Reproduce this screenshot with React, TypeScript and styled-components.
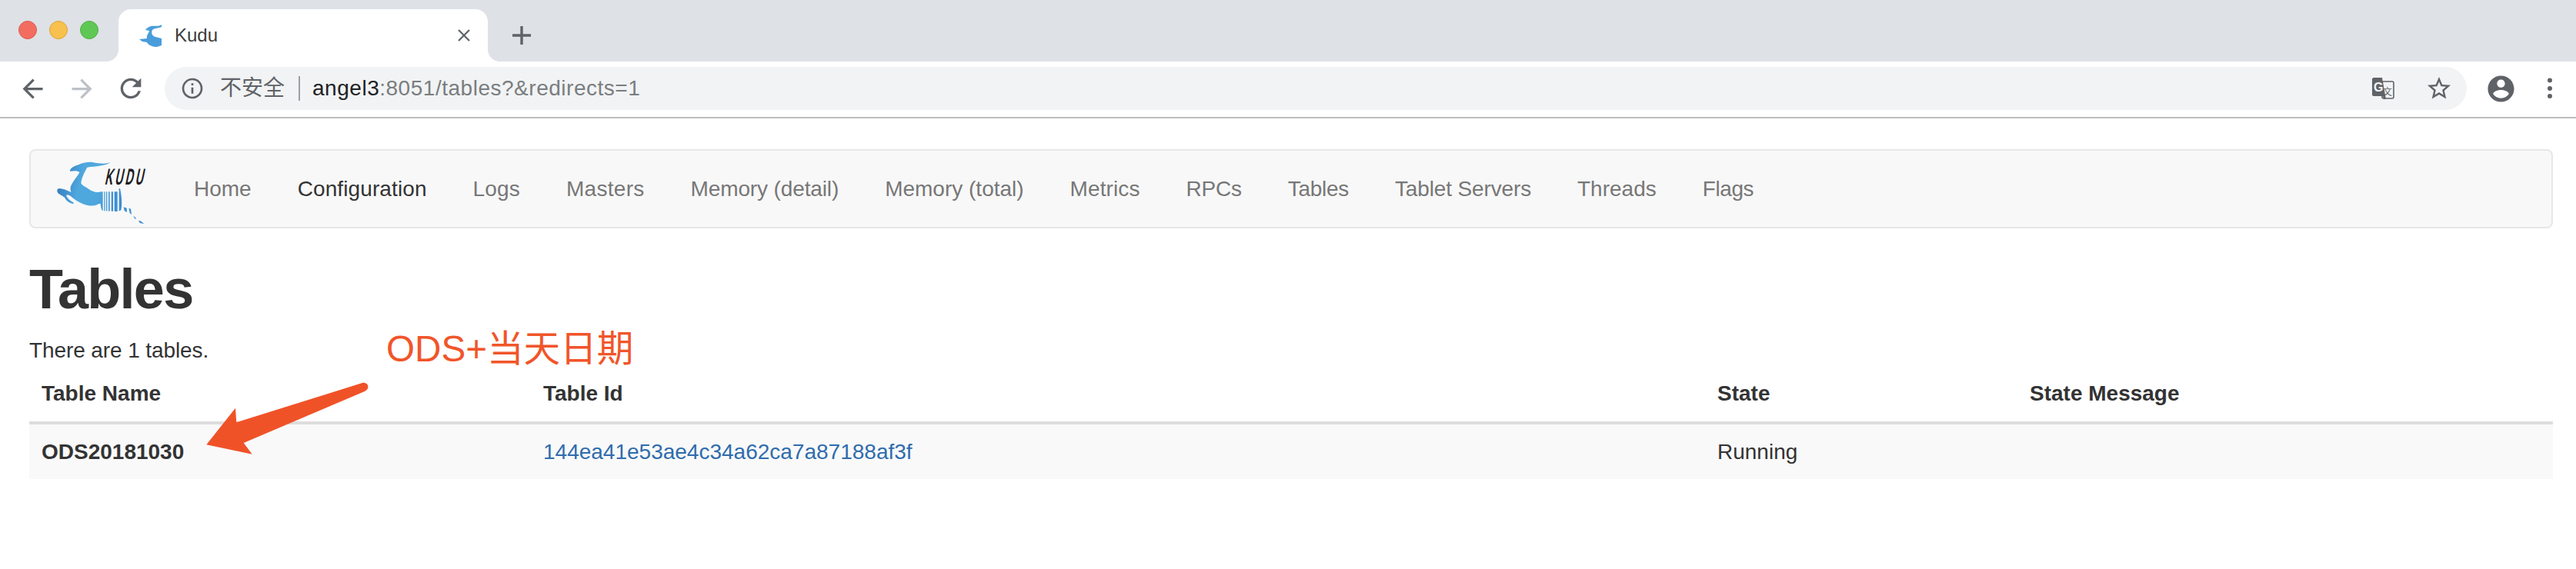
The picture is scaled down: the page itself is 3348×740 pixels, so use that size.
import React from "react";
import styled, { createGlobalStyle } from "styled-components";

const FONT = `"Liberation Sans", "Noto Sans CJK SC", Arial, sans-serif`;

const Global = createGlobalStyle`
  html, body { margin: 0; padding: 0; background: #fff; }
  body {
    font-family: ${FONT};
    font-size: 28px;
    line-height: 40px;
    color: #333;
    overflow: hidden;
  }
  * { box-sizing: border-box; }
`;

const Window = styled.div`
  width: 3348px;
  height: 740px;
  background: #fff;
`;

const TabStrip = styled.div`
  height: 80px;
  background: #dee1e6;
  display: flex;
  align-items: flex-end;
`;

const Lights = styled.div`
  width: 154px;
  height: 80px;
  padding: 27px 0 0 24px;
  display: flex;
  gap: 16px;
`;

const Light = styled.span<{ $fill: string; $edge: string }>`
  width: 24px;
  height: 24px;
  border-radius: 50%;
  background: ${(p) => p.$fill};
  border: 1px solid ${(p) => p.$edge};
`;

const Tab = styled.div`
  position: relative;
  width: 480px;
  height: 68px;
  background: #fff;
  border-radius: 16px 16px 0 0;
  display: flex;
  align-items: center;
  padding: 0 0 0 26px;
  &::before, &::after {
    content: "";
    position: absolute;
    bottom: 0;
    width: 15px;
    height: 15px;
  }
  &::before { left: -15px; background: radial-gradient(circle at 0 0, #dee1e6 14.5px, #fff 15px); }
  &::after { right: -15px; background: radial-gradient(circle at 100% 0, #dee1e6 14.5px, #fff 15px); }
`;

const Favicon = styled.svg`
  width: 31px;
  height: 31px;
  margin: 0 16px 0 0;
  flex: none;
`;

const TabTitle = styled.span`
  font-size: 24px;
  color: #3c3c3c;
  flex: 1;
`;

const CloseGlyph = styled.svg`
  width: 18px;
  height: 18px;
  margin-right: 22px;
`;

const NewTab = styled.svg`
  width: 24px;
  height: 24px;
  margin: 0 0 22px 32px;
`;

const Toolbar = styled.div`
  height: 74px;
  background: #fff;
  border-bottom: 2px solid #bdbdbd;
  display: flex;
  align-items: center;
  padding: 0 2px 2px 10px;
`;

const NavButton = styled.div`
  width: 64px;
  height: 64px;
  display: flex;
  align-items: center;
  justify-content: center;
`;

const Glyph = styled.svg<{ $size: number; $fill?: string }>`
  width: ${(p) => p.$size}px;
  height: ${(p) => p.$size}px;
  fill: ${(p) => p.$fill ?? "#5f6368"};
  flex: none;
`;

const Omnibox = styled.div`
  flex: 1;
  height: 56px;
  margin: 0 12px;
  background: #f1f3f4;
  border-radius: 28px;
  display: flex;
  align-items: center;
  padding: 0 18px 0 20px;
`;

const SecurityLabel = styled.span`
  color: #5f6368;
  font-size: 28px;
  margin-left: 20px;
`;

const Divider = styled.span`
  width: 2px;
  height: 32px;
  background: #9aa0a6;
  margin: 0 16px 0 18px;
`;

const Url = styled.span`
  flex: 1;
  font-size: 28px;
  letter-spacing: 0.52px;
  color: #7a7d80;
  white-space: nowrap;
`;

const Host = styled.span`
  color: #202124;
`;

const StarSlot = styled.div`
  margin-left: 40px;
  display: flex;
`;

const Main = styled.main`
  position: relative;
  padding: 40px 30px 0 38px;
`;

const NavBar = styled.nav`
  height: 103px;
  background: #f8f8f8;
  border: 2px solid #e7e7e7;
  border-radius: 8px;
  display: flex;
  margin-bottom: 40px;
`;

const Brand = styled.svg`
  width: 125px;
  height: 90px;
  margin: 9px 0 0 30px;
  flex: none;
`;

const NavList = styled.ul`
  list-style: none;
  display: flex;
  align-items: center;
  margin: 0 0 0 27px;
  padding: 0;
`;

const NavItem = styled.li<{ $active?: boolean; $track: number }>`
  padding: 0 30px;
  font-size: 28px;
  letter-spacing: ${(p) => p.$track}px;
  color: ${(p) => (p.$active ? "#333" : "#777")};
  white-space: nowrap;
`;

const Heading = styled.h1`
  font-size: 72px;
  line-height: 79px;
  font-weight: 700;
  letter-spacing: -1.7px;
  color: #333;
  margin: 0 0 20px;
`;

const Intro = styled.p`
  margin: 0;
  letter-spacing: -0.1px;
`;

const DataTable = styled.table`
  width: 100%;
  table-layout: fixed;
  border-collapse: collapse;
`;

const HeadCell = styled.th<{ $width?: number }>`
  width: ${(p) => (p.$width ? `${p.$width}px` : "auto")};
  text-align: left;
  font-weight: 700;
  padding: 16px;
  border-bottom: 4px solid #ddd;
`;

const BodyRow = styled.tr`
  background: #f9f9f9;
`;

const BodyCell = styled.td<{ $strong?: boolean }>`
  padding: 16px 16px 15px;
  font-weight: ${(p) => (p.$strong ? 700 : 400)};
`;

const TableLink = styled.a`
  color: #2f6cad;
  text-decoration: none;
`;

const Callout = styled.div`
  position: absolute;
  left: 502px;
  top: 270px;
  font-size: 47.6px;
  line-height: 60px;
  color: #f1552a;
  white-space: nowrap;
`;

const CalloutArrow = styled.svg`
  position: absolute;
  left: 260px;
  top: 340px;
  width: 230px;
  height: 100px;
`;

const NAV: Array<[string, number]> = [
  ["Home", 0],
  ["Configuration", 0.1],
  ["Logs", 0.15],
  ["Masters", 0.3],
  ["Memory (detail)", -0.13],
  ["Memory (total)", 0],
  ["Metrics", 0.1],
  ["RPCs", -0.2],
  ["Tables", -0.3],
  ["Tablet Servers", -0.14],
  ["Threads", 0],
  ["Flags", -0.4],
];

function Logo() {
  const gaps: Array<[number, number]> = [
    [191, 5],
    [200, 4],
    [208, 5],
    [218, 6],
    [231, 5],
    [248, 6],
  ];
  return (
    <Brand viewBox="0 0 375 270">
      <defs>
        <linearGradient id="kuduFill" x1="0" y1="0" x2="1" y2="0.2">
          <stop offset="0" stopColor="#2f6fb5" />
          <stop offset="0.42" stopColor="#4fa8de" />
          <stop offset="0.75" stopColor="#4ea6dd" />
          <stop offset="1" stopColor="#3d8fd2" />
        </linearGradient>
      </defs>
      <path
        fill="url(#kuduFill)"
        d="M225 15C212 26 180 24 150 18C125 15 100 26 80 34C70 38 63 46 62 53L85 52C92 53 98 55 100 58C95 70 75 90 66 112C63 122 65 130 68 135C50 128 35 120 20 120C12 122 10 132 18 140L42 155C46 165 58 178 78 180L76 175C62 168 52 158 48 148C50 144 58 144 66 150C80 165 110 182 135 187C150 189 165 187 175 180L182 180C183 195 186 205 190 208L250 210L262 205C266 185 266 160 258 120L253 122L254 133L185 133C165 138 150 132 135 122C122 112 108 108 106 98C108 80 120 55 130 38C160 33 205 34 225 15Z"
      />
      {gaps.map(([x, w]) => (
        <rect key={x} x={x} y={128} width={w} height={85} fill="#f8f8f8" />
      ))}
      <path fill="#3f8fd0" d="M272 193L284 197L285 213L275 208Z" />
      <path fill="#3f8fd0" d="M292 197L300 200L303 222L296 216Z" />
      <path fill="#3f8fd0" d="M310 228L316 232L322 240L315 238Z" />
      <path fill="#3f8fd0" d="M330 245L340 248L352 258L335 255Z" />
      <text
        transform="translate(197 106) skewX(-12) scale(0.48 1)"
        fontFamily="Liberation Sans, sans-serif"
        fontWeight="700"
        fontSize="89"
        letterSpacing="18"
        fill="#1d1d1f"
      >
        KUDU
      </text>
    </Brand>
  );
}

export default function App() {
  return (
    <Window>
      <Global />
      <TabStrip>
        <Lights>
          <Light $fill="#f26d60" $edge="#dc5a4e" />
          <Light $fill="#f8c04c" $edge="#dfa53a" />
          <Light $fill="#5fc854" $edge="#4fae45" />
        </Lights>
        <Tab>
          <Favicon viewBox="0 0 31 31">
            <path
              fill="#4a9ddb"
              d="M30 1C26 4 21 2 16 3C13 4 10 6 9 8L14 9C13 13 10 15 11 19L1 20L5 23L11 24C13 28 19 30 24 30L30 28L30 19L22 17C18 16 16 12 18 8C21 5 26 6 30 4Z"
            />
          </Favicon>
          <TabTitle>Kudu</TabTitle>
          <CloseGlyph viewBox="0 0 18 18">
            <path d="M2 2L16 16M16 2L2 16" stroke="#5f6368" strokeWidth="2.2" fill="none" />
          </CloseGlyph>
        </Tab>
        <NewTab viewBox="0 0 24 24">
          <path d="M12 0V24M0 12H24" stroke="#5f6368" strokeWidth="3.4" fill="none" strokeLinecap="round" />
        </NewTab>
      </TabStrip>
      <Toolbar>
        <NavButton>
          <Glyph $size={39} viewBox="0 0 24 24">
            <path d="M20 11H7.83l5.59-5.59L12 4l-8 8 8 8 1.41-1.41L7.83 13H20v-2z" />
          </Glyph>
        </NavButton>
        <NavButton>
          <Glyph $size={39} $fill="#bdc1c6" viewBox="0 0 24 24">
            <path d="M12 4l-1.41 1.41L16.17 11H4v2h12.17l-5.58 5.59L12 20l8-8z" />
          </Glyph>
        </NavButton>
        <NavButton>
          <Glyph $size={40} viewBox="0 0 24 24">
            <path d="M17.65 6.35A7.958 7.958 0 0 0 12 4c-4.42 0-7.99 3.58-7.99 8s3.57 8 7.99 8c3.73 0 6.84-2.55 7.73-6h-2.08A5.99 5.99 0 0 1 12 18c-3.31 0-6-2.69-6-6s2.69-6 6-6c1.66 0 3.14.69 4.22 1.78L13 11h7V4l-2.35 2.35z" />
          </Glyph>
        </NavButton>
        <Omnibox>
          <Glyph $size={32} viewBox="0 0 24 24">
            <path d="M11 7h2v2h-2zm0 4h2v6h-2zm1-9C6.48 2 2 6.48 2 12s4.48 10 10 10 10-4.48 10-10S17.52 2 12 2zm0 18c-4.41 0-8-3.59-8-8s3.59-8 8-8 8 3.59 8 8-3.59 8-8 8z" />
          </Glyph>
          <SecurityLabel>不安全</SecurityLabel>
          <Divider />
          <Url>
            <Host>angel3</Host>:8051/tables?&amp;redirects=1
          </Url>
          <Glyph $size={30} viewBox="0 0 30 30">
            <rect x="14" y="6" width="15" height="22" rx="2" fill="#f1f3f4" stroke="#5f6368" strokeWidth="1.6" />
            <path d="M3 1H14L19 29H16L15 25H3C2 25 1 24 1 23V3C1 2 2 1 3 1Z" />
            <text x="3" y="19" fontFamily="Liberation Sans, sans-serif" fontWeight="700" fontSize="16" fill="#f1f3f4">G</text>
            <text x="15" y="24" fontFamily="Noto Sans CJK SC, sans-serif" fontSize="12" fill="#5f6368">文</text>
          </Glyph>
          <StarSlot>
            <Glyph $size={36} viewBox="0 0 24 24">
              <path d="M22 9.24l-7.19-.62L12 2 9.19 8.63 2 9.24l5.46 4.73L5.82 21 12 17.27 18.18 21l-1.63-7.03L22 9.24zM12 15.4l-3.76 2.27 1-4.28-3.32-2.88 4.38-.38L12 6.1l1.71 4.04 4.38.38-3.32 2.88 1 4.28L12 15.4z" />
            </Glyph>
          </StarSlot>
        </Omnibox>
        <NavButton>
          <Glyph $size={41} viewBox="0 0 24 24">
            <path d="M12 2C6.48 2 2 6.48 2 12s4.48 10 10 10 10-4.48 10-10S17.52 2 12 2zm0 3c1.66 0 3 1.34 3 3s-1.34 3-3 3-3-1.34-3-3 1.34-3 3-3zm0 14.2c-2.5 0-4.71-1.28-6-3.22.03-1.99 4-3.08 6-3.08 1.99 0 5.97 1.09 6 3.08-1.29 1.94-3.5 3.22-6 3.22z" />
          </Glyph>
        </NavButton>
        <NavButton>
          <Glyph $size={32} viewBox="0 0 32 32">
            <circle cx="16" cy="5.5" r="3" />
            <circle cx="16" cy="16" r="3" />
            <circle cx="16" cy="26" r="3" />
          </Glyph>
        </NavButton>
      </Toolbar>
      <Main>
        <NavBar>
          <Logo />
          <NavList>
            {NAV.map(([item, track]) => (
              <NavItem key={item} $track={track} $active={item === "Configuration"}>
                {item}
              </NavItem>
            ))}
          </NavList>
        </NavBar>
        <Heading>Tables</Heading>
        <Intro>There are 1 tables.</Intro>
        <DataTable>
          <thead>
            <tr>
              <HeadCell $width={652}>Table Name</HeadCell>
              <HeadCell $width={1526}>Table Id</HeadCell>
              <HeadCell $width={406}>State</HeadCell>
              <HeadCell>State Message</HeadCell>
            </tr>
          </thead>
          <tbody>
            <BodyRow>
              <BodyCell $strong>ODS20181030</BodyCell>
              <BodyCell>
                <TableLink href="#">144ea41e53ae4c34a62ca7a87188af3f</TableLink>
              </BodyCell>
              <BodyCell>Running</BodyCell>
              <BodyCell />
            </BodyRow>
          </tbody>
        </DataTable>
        <Callout>ODS+当天日期</Callout>
        <CalloutArrow viewBox="260 494 230 100">
          <path
            fill="#f05228"
            d="M268.3 578.3L306 530.7L307.3 549.3L470 498.3C475 496.5 479 500 478.3 504C477.8 506.5 476 508 473.3 509.3L316.7 576L327.7 590.7Z"
          />
        </CalloutArrow>
      </Main>
    </Window>
  );
}
